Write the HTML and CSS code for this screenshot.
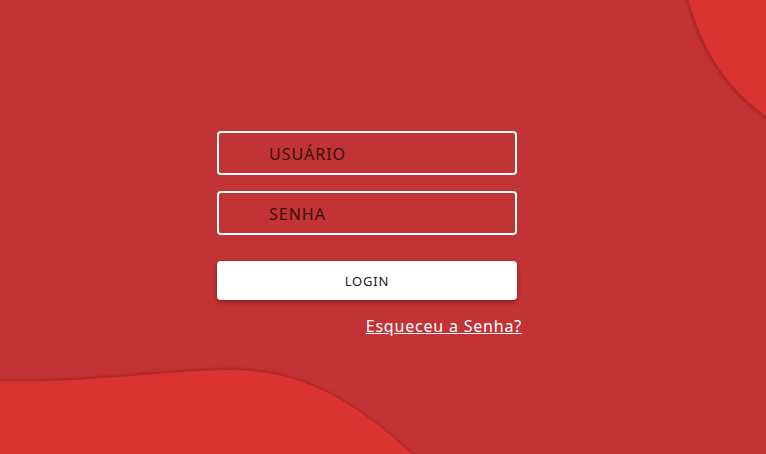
FILE: index.html
```html
<!DOCTYPE html>
<html lang="pt-BR">
<head>
<meta charset="utf-8">
<link rel="stylesheet" href="styles.css">
</head>
<body>
<svg class="blobs" width="766" height="454" viewBox="0 0 766 454">
  <defs>
    <filter id="sh" x="-10%" y="-10%" width="120%" height="120%">
      <feDropShadow dx="-1" dy="-1" stdDeviation="1.5" flood-color="#7a1010" flood-opacity="0.55"/>
    </filter>
    <filter id="sh2" x="-10%" y="-10%" width="120%" height="120%">
      <feDropShadow dx="-1" dy="1" stdDeviation="1.5" flood-color="#7a1010" flood-opacity="0.55"/>
    </filter>
  </defs>
  <path d="M0,381 C80,384 170,370 230,370 C300,370 352,398 414,456 L0,456 Z" fill="#db3031" filter="url(#sh)"/>
  <path d="M688,-2 C702,48 722,84 768,118 L768,-2 Z" fill="#db3031" filter="url(#sh2)"/>
</svg>
<main class="page">
  <form class="login">
    <div class="field"><span class="ph">USUÁRIO</span></div>
    <div class="field"><span class="ph">SENHA</span></div>
    <button type="button" class="btn">LOGIN</button>
    <a class="forgot" href="#">Esqueceu a Senha?</a>
  </form>
</main>
</body>
</html>
```
FILE: styles.css
```css
html, body {
  margin: 0;
  padding: 0;
  width: 766px;
  height: 454px;
  overflow: hidden;
  background: #c13334;
  font-family: "Noto Sans", "Open Sans", sans-serif;
}
.blobs {
  position: absolute;
  left: 0;
  top: 0;
}
.page {
  position: relative;
  padding-top: 131px;
  padding-left: 217px;
}
.login {
  width: 300px;
  display: flex;
  flex-direction: column;
}
.field {
  box-sizing: border-box;
  height: 44px;
  border: 2px solid #fff;
  border-radius: 4px;
  margin-bottom: 16px;
  display: flex;
  align-items: center;
  padding-left: 50px;
  padding-top: 1px;
}
.ph {
  color: #3b0d0f;
  font-size: 16px;
  letter-spacing: 1px;
}
.btn {
  margin-top: 10px;
  height: 39px;
  border: none;
  border-radius: 4px;
  background: #fff;
  box-shadow: 0 2px 4px rgba(60, 0, 0, 0.45);
  font-family: inherit;
  font-size: 13px;
  color: #222;
  letter-spacing: 0.8px;
}
.forgot {
  align-self: flex-end;
  margin-right: -5px;
  margin-top: 16px;
  color: #fff;
  font-size: 16px;
  letter-spacing: 0.8px;
  text-decoration: underline;
  line-height: 20px;
}
```
